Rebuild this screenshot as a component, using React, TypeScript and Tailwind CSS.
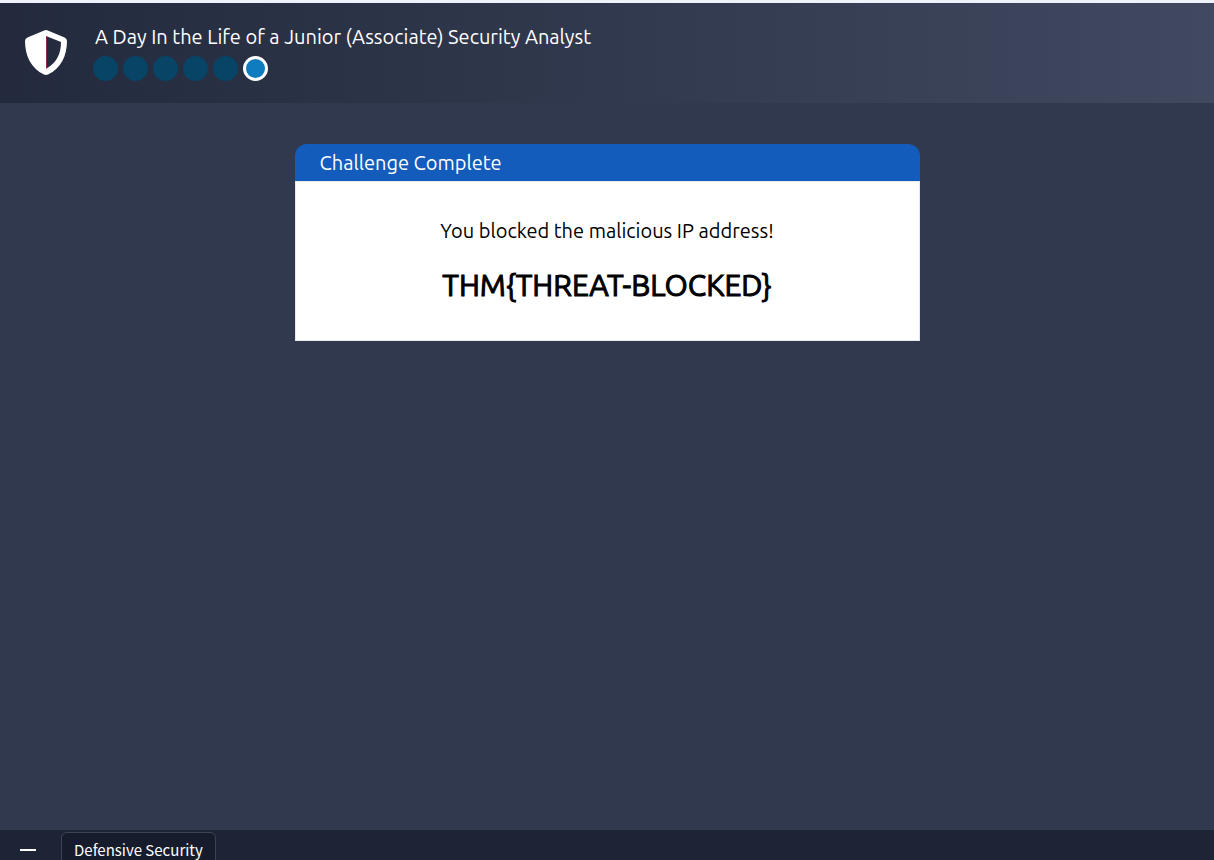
const STEPS = [1, 2, 3, 4, 5, 6];
const CURRENT_STEP = 6;

function ShieldLogo() {
  return (
    <svg viewBox="0 0 42 45" className="h-[45px] w-[42px] shrink-0" role="img" aria-label="Shield">
      <path
        fill="#fff"
        fillRule="evenodd"
        d="M19.200 .4Q21 -.3 22.800 .4L39.600 7.400Q42 8.500 42 11C42 25.500 36 38.500 23 44.500Q21 45.300 19 44.500C6 38.500 0 25.500 0 11Q0 8.500 2.400 7.400ZM21 6V38.700C31 33.500 36 24.500 36 12Z"
      />
      <path d="M21.500 6.200V38.400" stroke="#8d2c43" strokeWidth="1" />
    </svg>
  );
}

function Progress() {
  return (
    <ol className="-ml-0.5 flex gap-[5px]" aria-label="Progress">
      {STEPS.map((step) => (
        <li
          key={step}
          aria-current={step === CURRENT_STEP ? "step" : undefined}
          className={
            step === CURRENT_STEP
              ? "size-[25px] rounded-full border-[3px] border-white bg-[#0f7cc0]"
              : "size-[25px] rounded-full bg-[#074466]"
          }
        />
      ))}
    </ol>
  );
}

export default function App() {
  return (
    <div className="flex h-screen flex-col overflow-hidden bg-[#31394e] font-['Ubuntu','Noto_Sans',sans-serif] text-xl leading-6">
      <header className="flex h-[103px] shrink-0 items-start gap-7 border-t-[3px] border-[#eff2fa] bg-linear-to-r from-[#232a3d] to-[#404960] bg-origin-border px-[25px] pt-[22px] text-white">
        <div className="pt-[5px]">
          <ShieldLogo />
        </div>
        <div className="flex flex-col gap-[7px]">
          <h1>A Day In the Life of a Junior (Associate) Security Analyst</h1>
          <Progress />
        </div>
      </header>

      <main className="flex grow flex-col items-center px-6 pt-[41px]">
        <section className="w-full max-w-[625px]">
          <h2 className="rounded-t-xl bg-[#145cbc] px-[25px] pt-[7px] pb-1.5 text-white">Challenge Complete</h2>
          <div className="flex flex-col items-center gap-6 border border-[#e5e8ee] bg-white pt-[37px] pb-[37px] text-center text-black">
            <p>You blocked the malicious IP address!</p>
            <p className="text-[30px] leading-9 [-webkit-text-stroke:1px_#000]">THM&#123;THREAT-BLOCKED&#125;</p>
          </div>
        </section>
      </main>

      <footer className="flex h-[30px] shrink-0 items-start gap-[25px] bg-[#1c2435] pt-0.5 pl-5 font-['Source_Sans_Pro','Noto_Sans_CJK_SC',sans-serif] text-[15px] text-white">
        <button type="button" aria-label="Minimize" className="flex h-9 w-4 items-center">
          <span className="h-0.5 w-4 bg-white" />
        </button>
        <button type="button" className="h-9 rounded-md border border-[#3c4558] bg-[#161c2c] px-3 leading-8">
          Defensive Security
        </button>
      </footer>
    </div>
  );
}
